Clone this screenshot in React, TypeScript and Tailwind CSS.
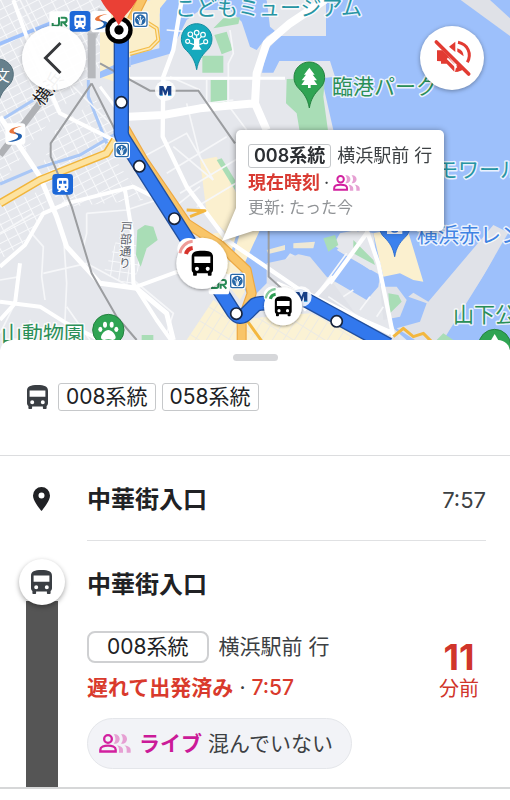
import type { ReactNode } from 'react';

type Point = [number, number];

const SHEET_FONT = "font-['Inter','Noto_Sans_CJK_JP',sans-serif]";

const STOPS: Point[] = [
  [364, 307],
  [418, 499],
  [523, 656],
  [709, 941],
  [1010, 964],
];

const PLACES = [
  { name: 'こどもミュージアム', x: 175, y: 15, color: '#2795a3' },
  { name: '臨港パーク', x: 332, y: 94, color: '#2a8f57' },
  { name: 'モワール', x: 437, y: 177, color: '#2795a3' },
  { name: '横浜赤レン', x: 417, y: 242, color: '#3f83e3' },
  { name: '山下公', x: 453, y: 322, color: '#2a8f57' },
  { name: '山動物園', x: 1, y: 341, color: '#2a8f57' },
];

const BUS_PATH =
  'M0 6C0 1.2 3.5 0 10.5 0S21 1.2 21 6v12c0 1.4-.6 2.4-1.4 3v2c0 .6-.4 1-1 1h-1.7c-.6 0-1-.4-1-1v-1.5H5.1V23c0 .6-.4 1-1 1H2.4c-.6 0-1-.4-1-1v-2C.6 20.4 0 19.4 0 18zM2.6 5.5v6.3h15.800V5.5zM5.200 15.300a2 2 0 1 0 0 4 2 2 0 0 0 0-4zM15.800 15.300a2 2 0 1 0 0 4 2 2 0 0 0 0-4z';

const BusIcon = ({ className }: { className?: string }) => (
  <svg viewBox="0 0 21 24" className={className} fill="currentColor" fillRule="evenodd" aria-hidden="true">
    <path d={BUS_PATH} />
  </svg>
);

const CrowdIcon = ({ className }: { className?: string }) => (
  <svg viewBox="0 0 96 57" className={className} aria-hidden="true">
    <g fill="none" stroke="#d2209f" strokeWidth="7">
      <circle cx="27" cy="15" r="11.5" />
      <path d="M4 52.500V47c0-8 12-12 23-12s23 4 23 12v5.500z" />
    </g>
    <g fill="#e6a0d3">
      <path d="M44 1c10-2 18 5 18 14s-8 16-18 14c7-8 7-20 0-28z" />
      <path d="M66 1c10-2 18 5 18 14s-8 16-18 14c7-8 7-20 0-28z" />
      <path d="M54 34c12 2 18 7 18 14v8H60v-8c0-6-2-10-6-14z" />
      <path d="M76 34c13 2 19 7 19 14v8H83v-8c0-6-2-10-7-14z" />
    </g>
  </svg>
);

const TrainBadge = ({ x, y }: { x: number; y: number }) => (
  <g transform={`translate(${x} ${y})`}>
    <rect x="-31" y="-31" width="62" height="62" rx="10" fill="#1d68d8" />
    <path
      fill="#fff"
      fillRule="evenodd"
      d="M-17-12q0-7 7-7h20q7 0 7 7v22q0 6-6 7l5 6H8l-4-5h-8l-4 5h-8l5-6q-6-1-6-7zM-11-11v9h9v-9zM2-11v9h9v-9zM-9 5a3 3 0 1 0 0 6 3 3 0 0 0 0-6zM9 5a3 3 0 1 0 0 6 3 3 0 0 0 0-6z"
    />
  </g>
);

const SubwayBadge = ({ x, y }: { x: number; y: number }) => (
  <g transform={`translate(${x} ${y})`}>
    <rect x="-25" y="-25" width="50" height="50" rx="7" fill="#fff" />
    <rect x="-20" y="-20" width="40" height="40" rx="5" fill="#fff" stroke="#2768a8" strokeWidth="4" />
    <circle r="16" fill="#2768a8" />
    <path d="M0-5V15M-10-5q8 3 8 18M10-5q-8 3-8 18" stroke="#fff" strokeWidth="3" fill="none" />
    <circle cy="-9" r="3" fill="#fff" />
  </g>
);

const SotetsuMark = ({ x, y }: { x: number; y: number }) => (
  <g transform={`translate(${x} ${y})`}>
    <rect x="-30" y="-32" width="60" height="64" rx="10" fill="#fff" />
    <path d="M20-23C4-23-18-16-18-7c0 8 30 4 32 15C12-4-4-4-5-10c0-6 12-11 25-13z" fill="#e8743a" />
    <path d="M-22 23c20 2 42-6 42-17C20-2 2-2-4-5 4 2 10 4 8 9c-2 7-17 11-30 14z" fill="#1f5fae" />
  </g>
);

const MinatoMark = ({ x, y }: { x: number; y: number }) => (
  <g transform={`translate(${x} ${y})`}>
    <circle r="31" fill="#fff" opacity=".85" />
    <path d="M-18 14v-28h12L0 0l6-14h12v28H8V-2L2 14h-4L-8-2v16z" fill="#173f86" />
    <path d="M-16 14h8M8 14h10" stroke="#2c9cd4" strokeWidth="3" />
  </g>
);

const JrMark = ({ x, y }: { x: number; y: number }) => (
  <g transform={`translate(${x} ${y})`}>
    <rect x="-31" y="-31" width="62" height="62" rx="8" fill="#fff" />
    <path
      d="M-2-13V6q0 6-6 6h-13V4M5 14V2h10q6 0 6-7t-6-7H3M11 2l11 12"
      fill="none"
      stroke="#278a55"
      strokeWidth="6"
    />
  </g>
);

const MapPin = ({ x, y, color, edge, children }: { x: number; y: number; color: string; edge: string; children?: ReactNode }) => (
  <g transform={`translate(${x} ${y})`}>
    <path
      d="M0 90C-5 62-15 48-31 32A46 46 0 1 1 31 32C15 48 5 62 0 90z"
      fill={color}
      stroke={edge}
      strokeWidth="3"
    />
    {children}
  </g>
);

const Paw = () => (
  <g fill="#fff">
    <path d="M0 0c10 0 22 13 22 22 0 10-12 8-22 6-10 2-22 4-22-6C-22 13-10 0 0 0z" />
    <ellipse cx="-24" cy="-2" rx="6" ry="8" />
    <ellipse cx="-10" cy="-16" rx="6" ry="9" />
    <ellipse cx="10" cy="-16" rx="6" ry="9" />
    <ellipse cx="24" cy="-2" rx="6" ry="8" />
  </g>
);

const BusMarker = ({ x, y, r, scale, signal, faded }: { x: number; y: number; r: number; scale: number; signal: string; faded: string }) => (
  <g transform={`translate(${x} ${y})`}>
    <circle r={r} fill="#fff" filter="url(#lift)" />
    <g transform={`scale(${scale})`}>
      <circle cx="-40" cy="-42" r="34" fill="#fff" />
      <path d="M-66-30A42 42 0 0 1-28-66" fill="none" stroke={faded} strokeWidth="9" />
      <path d="M-48-28A24 24 0 0 1-28-46" fill="none" stroke={signal} strokeWidth="12" />
      <path d={BUS_PATH} transform="translate(-31 -38) scale(3.05 3.15)" fillRule="evenodd" fill="#000" />
    </g>
  </g>
);

/** Terrain, streets and rail lines, drawn at three units to the pixel. */
const Terrain = () => (
  <>
    <rect width="4000" height="1080" fill="#e5e7ec" />
    {/* building blocks with dense side streets */}
    <path d="M0 0H300V200L100 420 0 560z" fill="url(#streets)" />
    <path d="M170 380L290 300 350 400 340 470 430 600 200 620 110 540z" fill="url(#streets)" />
    <path d="M0 620L150 560 130 640 70 730 0 780z" fill="url(#streets)" />
    <path d="M310 820L350 720 400 690 420 800 390 860z" fill="url(#streetsWide)" />
    {/* commercial areas */}
    <path d="M300 90L320 20 470 0 480 60V130L390 165V260L300 230z" fill="#fbefcb" />
    <path d="M450 0H510L500 30 470 45z" fill="#fbefcb" />
    <path d="M600 480L650 470 720 600 700 720 620 640z" fill="#fbf0cf" />
    <path d="M640 700L780 690 740 780 760 830 720 900 640 800z" fill="#fbf0cf" />
    <path d="M560 1020L640 900 720 960 800 950 930 940 1130 1020V1080H560z" fill="#fbf2d4" />
    <path d="M560 1020L640 900 720 960 800 950 930 940 1130 1020V1080H560z" fill="url(#streetsGold)" />
    {/* water */}
    <g fill="#9dc0fb">
      <path d="M480 25L500 0H545L515 160 392 196V165L478 145z" />
      <path d="M300 215L392 170V200L300 235z" />
      <path d="M510 0H800L815 60 830 90 800 110 770 150 750 140 725 65 690 30 600 30 560 60 530 120z" />
      <path d="M842 108H978V0H4000V1080H1300L1220 1020 1060 880 800 690 800 560 1000 390 965 235 1005 230 990 183H838L820 218H786L800 150z" />
      <path d="M780 690H1120L1080 760 980 810 870 760 800 850 750 900 715 830z" />
      <path d="M0 125L160 60V72L0 137z" />
    </g>
    <g fill="none" stroke="#a9c7f6" strokeWidth="9">
      <path d="M0 362L125 285M110 505L240 465 350 400M265 240V290L320 430M0 552L110 505M690 785L715 700" />
    </g>
    {/* reclaimed land and piers */}
    <path d="M530 120L610 30 690 35 725 90 750 145 760 230H500z" fill="#e5e7ec" />
    <path d="M800 0H978V107H842L810 80z" fill="#e5e7ec" />
    <path d="M1382 0H1470L1530 55V108z" fill="#dfe1e7" />
    <path d="M800 690V850L850 870 950 800 940 775 900 760 870 775 800 790z" fill="#e0e2e8" />
    <path d="M800 850L870 770 940 765 1000 830 1140 900 1200 1020H1110L930 900z" fill="#e0e2e8" />
    <path d="M1010 750L1080 690 1120 700 1140 850 1180 990 1080 960 1000 850 1110 820z" fill="#e5e7ec" />
    <path d="M1000 745L1140 825 1135 860 1100 900 980 830 930 770 860 755 850 715 930 690 1020 690z" fill="#9dc0fb" />
    <path d="M880 730L945 725 940 745 880 745zM800 750L855 735V750L805 762z" fill="#eee8d5" />
    <path d="M1020 700L1070 690 1140 800 1110 810 1000 735z" fill="#e5e7ec" />
    <path d="M1120 700L1220 680 1270 845 1240 840 1200 820 1150 830z" fill="#fbf0cf" />
    <path d="M1480 675L1530 700 1330 1020H1245L1190 985 1260 965 1280 910 1225 890 1240 878 1285 905z" fill="#e0e2e8" />
    <path d="M1500 740L1530 690V1080H1310z" fill="#9dc0fb" />
    <path d="M1140 860L1190 860 1220 900 1200 950 1150 960z" fill="#e0e2e8" />
    {/* parks */}
    <g fill="#a9ddb6">
      <path d="M640 85L670 55 720 52 715 72z" />
      <path d="M643 105L680 95 698 150 665 163zM607 167H670V218H607zM632 240H681V308H632z" />
      <path d="M860 237L975 235 970 290 985 400 900 400 890 340 858 310z" />
      <path d="M412 690L435 675 460 680 473 720 440 745 422 800 408 765z" />
      <path d="M650 480L665 475 705 540V570z" />
      <path d="M970 715L1005 705 1015 735 985 755zM1060 720L1120 780 1125 795 1060 760zM1165 880L1195 885 1205 905 1170 940zM425 1005H460V1020H425zM1310 1020L1330 1000 1360 1020z" />
    </g>
    {/* side streets */}
    <g fill="none" stroke="#f6f7f9" strokeWidth="5">
      <path d="M95 700L130 740 125 830 135 900M190 700L200 850 195 960M260 640V700L250 740M260 640L380 630 470 600M130 820L260 790 390 860M0 840L60 830M60 0L160 200M200 240L380 420" />
      <path d="M600 270L510 230M620 240V310L700 300M690 90L700 160 685 190V310M560 310L600 470M500 520L680 410M540 580L740 460M430 470L560 400 640 540M520 440L640 540M680 310L740 390M500 90L620 100" />
      <path d="M500 640L600 560M590 620L740 530M400 840L520 940 500 1000M0 700L100 640M0 1000L50 900M90 960L100 1020M200 920L270 1020" />
      <path d="M1030 890L1060 870M1080 930L1110 890M1130 950L1150 920M960 870L1040 760M985 890L1090 960" />
    </g>
    {/* main streets */}
    <g fill="none" stroke="#fff" strokeLinejoin="round">
      <path d="M0 350L120 530 170 650 200 740 300 850 410 865 500 940 520 1020" strokeWidth="15" />
      <path d="M0 800L75 735 130 640 200 610 400 560 480 600M375 570L395 690 400 850 470 960 520 1030" strokeWidth="12" />
      <path d="M40 0L80 110 180 340 360 430M60 790L45 910 0 960M0 905L120 920 200 970 300 1020M410 860L600 790 640 870" strokeWidth="12" />
      <path d="M975 0L870 70 800 130 770 220 765 310 800 390M765 310L600 325 490 345 385 350" strokeWidth="24" />
      <path d="M545 0L520 150 490 230 488 410 560 560 680 720 900 870 1170 1000" strokeWidth="13" />
      <path d="M390 235H855M300 260L360 340" strokeWidth="9" />
      <path d="M1100 690L1135 790 1170 960 1180 1010M990 850L1100 700M910 930L1000 830M830 850L1180 1000" strokeWidth="13" />
    </g>
    {/* arterials */}
    <g fill="none" strokeLinejoin="round">
      <path d="M0 610L120 540 320 460 345 420" stroke="#f1b53b" strokeWidth="25" />
      <path d="M0 610L120 540 320 460 345 420" stroke="#fde3a0" strokeWidth="16" />
      <path d="M390 162L450 145 475 120 470 85 430 60" stroke="#f3bd49" strokeWidth="12" />
      <path d="M390 162L450 145 475 120 470 85 430 60" stroke="#fde8b4" strokeWidth="5" />
      <path d="M430-10L395 60M375 385L430 480 560 670 660 735 740 810 755 880 725 965V1030" stroke="#eda943" strokeWidth="30" />
      <path d="M430-10L395 60M375 385L430 480 560 670 660 735 740 810 755 880 725 965V1030" stroke="#f9c568" strokeWidth="23" />
      <path d="M560 630L615 632 570 650M740 960L790 1030M1180 1010L1210 985 1240 1010 1270 1000 1300 1030" stroke="#f3b73f" strokeWidth="9" />
    </g>
    {/* rail */}
    <g fill="none" stroke="#9b9da0" strokeWidth="6">
      <path d="M275 250L152 430V470L215 620 275 820 350 950 410 1020M275 250L345 390M300 190L450 272H595L705 430M806 680V830L850 870" />
      <path d="M310 30L275 110" strokeWidth="30" stroke="#c4c6ca" />
      <path d="M275 100V235" strokeWidth="24" stroke="#b6b8bc" />
      <path d="M150 270L0 465" strokeWidth="20" stroke="#afb1b5" />
    </g>
  </>
);

const Route = () => (
  <>
    <g fill="none" strokeLinejoin="round">
      <path d="M364 90V390Q362 405 372 420L700 935Q720 962 742 938L765 915Q780 905 850 912L900 890 1165 1035" stroke="#214f9e" strokeWidth="46" />
      <path d="M364 90V390Q362 405 372 420L700 935Q720 962 742 938L765 915Q780 905 850 912L900 890 1165 1035" stroke="#3278ed" strokeWidth="38" />
    </g>
    {STOPS.map(([x, y]) => (
      <circle key={x} cx={x} cy={y} r="17" fill="#fff" stroke="#16233c" strokeWidth="5" />
    ))}
  </>
);

const CityMap = () => (
  <svg
    viewBox="0 0 510 350"
    preserveAspectRatio="xMinYMin slice"
    className="block h-[350px] w-full bg-[#9dc0fb]"
    role="img"
    aria-label="地図"
  >
    <defs>
      <pattern id="streets" width="34" height="25" patternUnits="userSpaceOnUse" patternTransform="rotate(-27)">
        <path d="M0 0H34M0 0V25" stroke="#f8f9fb" strokeWidth="6" />
      </pattern>
      <pattern id="streetsWide" width="26" height="28" patternUnits="userSpaceOnUse" patternTransform="rotate(8)">
        <path d="M0 0H26M0 0V28" stroke="#f8f9fb" strokeWidth="6" />
      </pattern>
      <pattern id="streetsGold" width="50" height="28" patternUnits="userSpaceOnUse" patternTransform="rotate(-58)">
        <path d="M0 0H50M0 0V28" stroke="#eceae3" strokeWidth="6" />
      </pattern>
      <filter id="lift" x="-30%" y="-30%" width="160%" height="160%">
        <feDropShadow dx="0" dy="3" stdDeviation="5" floodOpacity=".4" />
      </filter>
    </defs>
    <g transform="scale(.333333)">
      <Terrain />
      <Route />
      <JrMark x={179} y={65} />
      <SotetsuMark x={303} y={65} />
      <TrainBadge x={240} y={64} />
      <TrainBadge x={188} y={553} />
      <SotetsuMark x={46} y={402} />
      <SubwayBadge x={421} y={59} />
      <SubwayBadge x={365} y={450} />
      <JrMark x={657} y={852} />
      <SubwayBadge x={712} y={843} />
      <MinatoMark x={496} y={272} />
      <MinatoMark x={904} y={890} />
      <MapPin x={-6} y={225} color="#66808c" edge="#546e7a" />
      <MapPin x={590} y={119} color="#16a9bd" edge="#128c9f">
        <g fill="none" stroke="#fff" strokeWidth="3.5">
          <circle cx="0" cy="-21" r="7" />
          <circle cx="-19" cy="-16" r="7" />
          <circle cx="19" cy="-15" r="7" />
          <circle cx="-27" cy="5" r="6" />
          <circle cx="27" cy="6" r="6" />
          <path d="M-21 10l13 5M21 10L8 15M-15-10l9 10M15-10L6 0M0-14v10" />
        </g>
        <path d="M-8-4H8V20l7 10h-30l7-10z" fill="#fff" />
      </MapPin>
      <MapPin x={928} y={234} color="#2fa453" edge="#24813f">
        <path d="M0-31L16-10H10L23 7H14L24 21H4V30H-4V21H-24L-14 7H-23L-10-10H-16z" fill="#fff" />
      </MapPin>
      <MapPin x={1184} y={680} color="#3b82ee" edge="#2c6dd0">
        <path d="M-23-8H23V22H-23z" fill="#fff" />
        <path d="M-10 4q0 12 10 12t10-12" stroke="#3b82ee" strokeWidth="5" fill="none" />
      </MapPin>
      <g transform="translate(325 990)">
        <circle r="47" fill="#2fa453" stroke="#24813f" strokeWidth="3" />
        <Paw />
      </g>
      <g transform="translate(1484 1036)">
        <circle r="48" fill="#2fa453" stroke="#24813f" strokeWidth="3" />
        <path d="M0-34L20 0H-20z" fill="#fff" />
      </g>
    </g>

    <g fontFamily="'Noto Sans CJK JP', sans-serif" stroke="#fff" strokeOpacity=".8" strokeLinejoin="round" paintOrder="stroke">
      {PLACES.map((place) => (
        <text key={place.name} x={place.x} y={place.y} fontSize="21" fill={place.color} strokeWidth="3">
          {place.name}
        </text>
      ))}
      <text x="-5" y="81" fontSize="15" fill="#fff" stroke="none">
        文
      </text>
      <text x="42" y="107" fontSize="18" fill="#222" strokeWidth="2" transform="rotate(-52 42 107)">
        横浜
      </text>
      <text x="127" y="221" fontSize="12" fill="#5c626b" strokeWidth="2" writingMode="vertical-rl" transform="rotate(3 127 221)">
        戸部通り
      </text>
    </g>

    <g transform="scale(.333333)">
      <circle cx="357" cy="90" r="41" fill="#000" />
      <circle cx="357" cy="90" r="28" fill="#fff" />
      <circle cx="357" cy="90" r="14" fill="#000" />
      <path d="M298-10H416Q400 22 376 46L356 76 338 46Q312 22 298-10z" fill="#ea4035" />
      <BusMarker x={606} y={790} r={77} scale={1} signal="#d6332c" faded="#ee9c99" />
      <BusMarker x={849} y={919} r={57} scale={0.79} signal="#2c9a52" faded="#86c99b" />
    </g>
  </svg>
);

const Callout = () => (
  <div
    className={`absolute left-[236px] top-[130px] rounded-[5px] bg-white px-3 pb-3 pt-3.5 text-[18px] text-[#3c4043] drop-shadow-[0_1px_3px_rgba(0,0,0,0.45)] ${SHEET_FONT}`}
  >
    <svg viewBox="0 0 34 36" className="absolute -left-3.5 top-[76px] h-9 w-[34px] fill-white" aria-hidden="true">
      <path d="M14 0V2L0 35 34 24V0z" />
    </svg>
    <div className="relative flex items-center gap-1.5 whitespace-nowrap leading-[24px]">
      <span className="flex h-6 items-center rounded-[3px] border border-[#c4c7ca] px-[5px] font-semibold text-[#2c2f33]">008系統</span>
      <span>横浜駅前 行</span>
    </div>
    <div className="relative mt-0.5 flex items-center gap-1 leading-[26px]">
      <span className="font-bold text-[#d93a32]">現在時刻</span>
      <span>·</span>
      <CrowdIcon className="h-4 w-[27px]" />
    </div>
    <div className="relative text-[16px] leading-[23px] text-[#909396]">更新: たった今</div>
  </div>
);

const MapHeader = () => (
  <header className="relative overflow-hidden">
    <CityMap />
    <Callout />
    <button
      type="button"
      aria-label="戻る"
      className="absolute left-[22px] top-[26px] grid size-16 place-items-center rounded-full bg-white/95 shadow-[0_1px_4px_rgba(0,0,0,0.25)]"
    >
      <svg viewBox="0 0 64 64" className="size-16" aria-hidden="true">
        <path d="M38.500 17L23.500 32 38.500 47" fill="none" stroke="#36383b" strokeWidth="3" />
      </svg>
    </button>
    <button
      type="button"
      aria-label="音声をオンにする"
      className="absolute right-[26px] top-[26px] size-16 rounded-full bg-white shadow-[0_1px_4px_rgba(0,0,0,0.35)]"
    >
      <svg viewBox="240 77 192 192" className="size-16" aria-hidden="true">
        <g fill="#e23b32">
          <path d="M291 150H307L322 164 332 178 343 190V214L320 190H303V183L291 182z" />
          <path d="M327 139L346 124V155z" />
          <path d="M352 144Q370 149 371 168L352 154z" />
          <path d="M350 193L361 199 354 214 345 215z" />
        </g>
        <g fill="none" stroke="#e23b32" strokeWidth="9">
          <path d="M354 126C384 132 396 160 382 186M352 210Q361 208 369 203" />
          <path d="M322 174L350 202" stroke="#fff" strokeWidth="5" />
          <path d="M297 116L395 214" stroke="#fff" strokeWidth="7" />
          <path d="M289 125L386 221" strokeWidth="11" strokeLinecap="round" />
        </g>
      </svg>
    </button>
  </header>
);

const RouteChip = ({ label }: { label: string }) => (
  <span className="flex h-7 items-center rounded-[3px] border border-[#c6c8ca] px-[7px] text-[21px] text-[#202124]">{label}</span>
);

const StopName = ({ children }: { children: ReactNode }) => (
  <h2 className="text-[24px] font-bold leading-8 text-[#202124]">{children}</h2>
);

const OriginRow = () => (
  <div className="flex gap-1 pr-6">
    <div className="flex w-[83px] shrink-0 items-center justify-center">
      <svg viewBox="0 0 17 24" className="h-6 w-[17px]" fill="#202124" fillRule="evenodd" aria-hidden="true">
        <path d="M8.500 0A8.500 8.500 0 0 0 0 8.500C0 14.500 8.500 24 8.500 24S17 14.500 17 8.500A8.500 8.500 0 0 0 8.500 0zM8.500 5.500a3 3 0 1 1 0 6 3 3 0 0 1 0-6z" />
      </svg>
    </div>
    <div className="flex flex-1 items-center justify-between border-b border-[#e0e1e3] pb-6 pt-7">
      <StopName>中華街入口</StopName>
      <time className="text-[22px] leading-8 text-[#3c4043]">7:57</time>
    </div>
  </div>
);

const DepartureRow = () => (
  <div className="flex gap-1 pr-6">
    <div className="flex w-[83px] shrink-0 flex-col items-center pt-[18px]">
      <span className="z-10 grid size-[46px] place-items-center rounded-full bg-white shadow-[0_2px_5px_rgba(0,0,0,0.35)]">
        <BusIcon className="h-6 w-[21px] text-[#3a3e43]" />
      </span>
      <span className="-mt-1 w-8 flex-1 bg-[#555]" />
    </div>
    <div className="flex-1 pb-[18px] pt-7">
      <StopName>中華街入口</StopName>
      <div className="mt-[30px] flex items-start justify-between">
        <div className="text-[21px] text-[#3c4043]">
          <div className="flex items-center gap-2.5">
            <span className="flex h-8 items-center rounded-[8px] border-2 border-[#cfd0d2] px-[18px] text-[#202124]">008系統</span>
            <span>横浜駅前 行</span>
          </div>
          <div className="mt-[11px] flex gap-1.5 leading-7">
            <span className="font-bold text-[#d93a2c]">遅れて出発済み</span>
            <span>·</span>
            <time className="font-medium text-[#d93a2c]">7:57</time>
          </div>
          <div className="mt-4 inline-flex h-[51px] items-center gap-1.5 rounded-full border border-[#e4e6ea] bg-[#f2f3f7] pl-[11px] pr-[18px]">
            <CrowdIcon className="mr-0.5 h-[19px] w-8" />
            <span className="font-bold text-[#cb1a98]">ライブ</span>
            <span>混んでいない</span>
          </div>
        </div>
        <div className="flex w-[54px] flex-col items-center pt-1 text-[#d0352b]">
          <strong className="text-[36px] font-bold leading-[44px]">11</strong>
          <span className="text-[20px] leading-5">分前</span>
        </div>
      </div>
    </div>
  </div>
);

export default function App() {
  return (
    <div className={`min-h-screen bg-white ${SHEET_FONT}`}>
      <MapHeader />
      <main className="relative -mt-2.5 rounded-t-[12px] border-b-2 border-[#d6d7d8] bg-white">
        <div className="border-b border-[#dcdddf] pb-11 pt-3.5">
          <div className="mx-auto h-[7px] w-[45px] rounded-full bg-[#d6d7da]" />
          <div className="mt-[22px] flex items-center gap-1.5 pl-[27px]">
            <BusIcon className="mr-1 h-6 w-[21px] text-[#3a3e43]" />
            <RouteChip label="008系統" />
            <RouteChip label="058系統" />
          </div>
        </div>
        <OriginRow />
        <DepartureRow />
      </main>
    </div>
  );
}
